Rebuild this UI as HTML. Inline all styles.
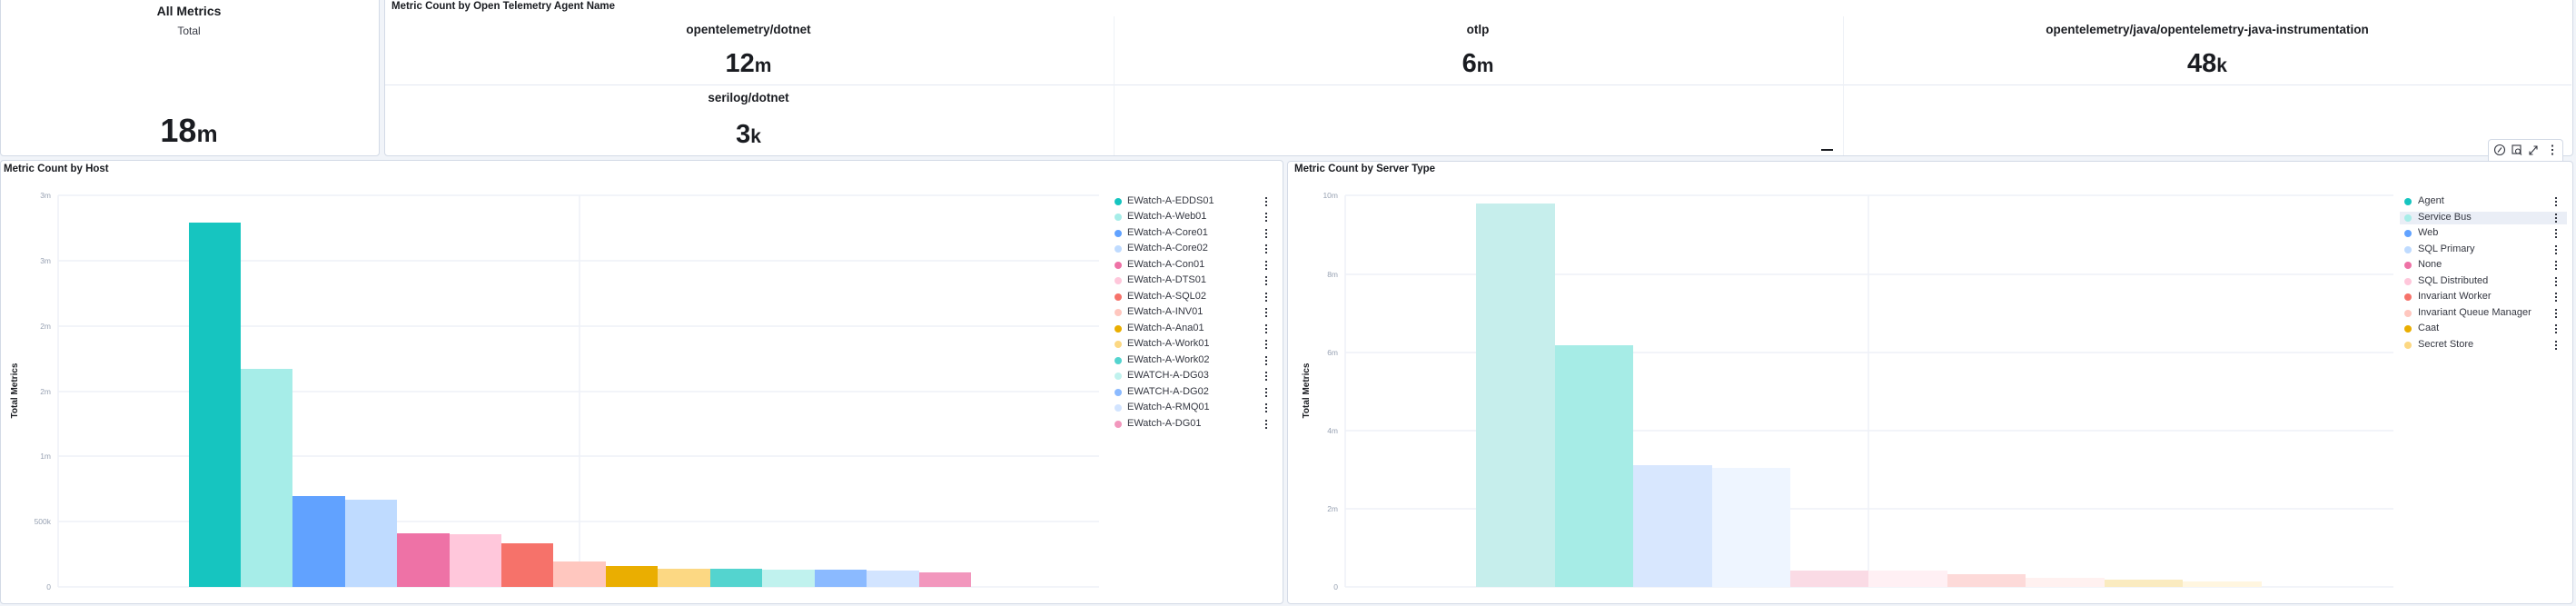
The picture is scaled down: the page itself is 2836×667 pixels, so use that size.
<!DOCTYPE html>
<html><head><meta charset="utf-8"><style>
*{margin:0;padding:0;box-sizing:border-box}
body{width:2836px;height:667px;background:#f1f4f9;position:relative;overflow:hidden;font-family:"Liberation Sans",sans-serif;color:#1a1c21}
.p{position:absolute;background:#fff;border:1px solid #d3dae6;border-radius:4px}
.a{position:absolute;white-space:nowrap}
.c{transform:translateX(-50%);text-align:center}
.t{font-size:11.5px;font-weight:bold;color:#1a1c21}
.lbl{font-size:13.5px;font-weight:bold}
.v{font-size:29px;font-weight:bold;color:#1a1c21}
.v small{font-size:21px}
.lg{font-size:11px;color:#343741}
.dot{position:absolute;width:8px;height:8px;border-radius:50%}
.kb{position:absolute;width:2px;height:10px;border-left:2px dotted #343741}
</style></head><body>

<div class="p" style="left:0;top:-4px;width:418px;height:176px"></div>
<div class="a c" style="left:208px;top:4px;font-size:14px;font-weight:bold">All Metrics</div>
<div class="a c lg" style="left:208px;top:27px;font-size:12px;color:#343741">Total</div>
<div class="a c v" style="left:208px;top:123px;font-size:36px">18<small style="font-size:26px">m</small></div>

<div class="p" style="left:423px;top:-4px;width:2410px;height:176px"></div>
<div class="a t" style="left:431px;top:1px;font-weight:bold">Metric Count by Open Telemetry Agent Name</div>
<div class="a" style="left:424px;top:93px;width:2407px;height:1px;background:#e3e8f2"></div>
<div class="a" style="left:1226px;top:18px;width:1px;height:153px;background:#eef1f6"></div>
<div class="a" style="left:2029px;top:18px;width:1px;height:153px;background:#eef1f6"></div>
<div class="a c lbl" style="left:824px;top:25px">opentelemetry/dotnet</div>
<div class="a c v" style="left:824px;top:54px">12<small>m</small></div>
<div class="a c lbl" style="left:1627px;top:25px">otlp</div>
<div class="a c v" style="left:1627px;top:54px">6<small>m</small></div>
<div class="a c lbl" style="left:2430px;top:25px">opentelemetry/java/opentelemetry-java-instrumentation</div>
<div class="a c v" style="left:2430px;top:54px">48<small>k</small></div>
<div class="a c lbl" style="left:824px;top:100px">serilog/dotnet</div>
<div class="a c v" style="left:824px;top:132px">3<small>k</small></div>
<div class="a" style="left:2005px;top:164px;width:13px;height:2px;background:#1a1c21"></div>

<!-- Host panel -->
<div class="p" style="left:0;top:176px;width:1413px;height:489px"></div>
<div class="a t" style="left:4px;top:180px">Metric Count by Host</div>
<svg class="a" style="left:0;top:0" width="1413" height="667">
<g stroke="#eef1f7" stroke-width="1.5">
<line x1="64" y1="215" x2="1210" y2="215"/><line x1="64" y1="287" x2="1210" y2="287"/><line x1="64" y1="359" x2="1210" y2="359"/><line x1="64" y1="431" x2="1210" y2="431"/><line x1="64" y1="502" x2="1210" y2="502"/><line x1="64" y1="574" x2="1210" y2="574"/><line x1="64" y1="646" x2="1210" y2="646"/>
<line x1="64" y1="215" x2="64" y2="646"/><line x1="638" y1="215" x2="638" y2="646"/>
</g>
<g font-size="8.5" fill="#98a2b3" text-anchor="end" font-family="Liberation Sans">
<text x="56" y="218">3m</text><text x="56" y="290">3m</text><text x="56" y="362">2m</text><text x="56" y="434">2m</text><text x="56" y="505">1m</text><text x="56" y="577">500k</text><text x="56" y="649">0</text>
</g>
<text transform="translate(19,430) rotate(-90)" font-size="10" font-weight="bold" fill="#1a1c21" text-anchor="middle" font-family="Liberation Sans">Total Metrics</text>
<rect x="208" y="245" width="57" height="401" fill="#16c5c0"/>
<rect x="265" y="406" width="57" height="240" fill="#a6ede8"/>
<rect x="322" y="546" width="58" height="100" fill="#61a2ff"/>
<rect x="380" y="550" width="57" height="96" fill="#bfdbff"/>
<rect x="437" y="587" width="58" height="59" fill="#ee72a6"/>
<rect x="495" y="588" width="57" height="58" fill="#ffc7db"/>
<rect x="552" y="598" width="57" height="48" fill="#f6726a"/>
<rect x="609" y="618" width="58" height="28" fill="#ffc7bf"/>
<rect x="667" y="623" width="57" height="23" fill="#eaae01"/>
<rect x="724" y="626" width="58" height="20" fill="#fcd883"/>
<rect x="782" y="626" width="57" height="20" fill="#54d4cf"/>
<rect x="839" y="627" width="58" height="19" fill="#c0f2ee"/>
<rect x="897" y="627" width="57" height="19" fill="#8bbaff"/>
<rect x="954" y="628" width="58" height="18" fill="#d2e4ff"/>
<rect x="1012" y="630" width="57" height="16" fill="#f297bd"/>
</svg>
<div class="dot" style="left:1227px;top:218px;background:#16c5c0"></div><div class="a lg" style="left:1241px;top:215px">EWatch-A-EDDS01</div>
<div class="dot" style="left:1227px;top:235px;background:#a6ede8"></div><div class="a lg" style="left:1241px;top:232px">EWatch-A-Web01</div>
<div class="dot" style="left:1227px;top:253px;background:#61a2ff"></div><div class="a lg" style="left:1241px;top:250px">EWatch-A-Core01</div>
<div class="dot" style="left:1227px;top:270px;background:#bfdbff"></div><div class="a lg" style="left:1241px;top:267px">EWatch-A-Core02</div>
<div class="dot" style="left:1227px;top:288px;background:#ee72a6"></div><div class="a lg" style="left:1241px;top:285px">EWatch-A-Con01</div>
<div class="dot" style="left:1227px;top:305px;background:#ffc7db"></div><div class="a lg" style="left:1241px;top:302px">EWatch-A-DTS01</div>
<div class="dot" style="left:1227px;top:323px;background:#f6726a"></div><div class="a lg" style="left:1241px;top:320px">EWatch-A-SQL02</div>
<div class="dot" style="left:1227px;top:340px;background:#ffc7bf"></div><div class="a lg" style="left:1241px;top:337px">EWatch-A-INV01</div>
<div class="dot" style="left:1227px;top:358px;background:#eaae01"></div><div class="a lg" style="left:1241px;top:355px">EWatch-A-Ana01</div>
<div class="dot" style="left:1227px;top:375px;background:#fcd883"></div><div class="a lg" style="left:1241px;top:372px">EWatch-A-Work01</div>
<div class="dot" style="left:1227px;top:393px;background:#54d4cf"></div><div class="a lg" style="left:1241px;top:390px">EWatch-A-Work02</div>
<div class="dot" style="left:1227px;top:410px;background:#c0f2ee"></div><div class="a lg" style="left:1241px;top:407px">EWATCH-A-DG03</div>
<div class="dot" style="left:1227px;top:428px;background:#8bbaff"></div><div class="a lg" style="left:1241px;top:425px">EWATCH-A-DG02</div>
<div class="dot" style="left:1227px;top:445px;background:#d2e4ff"></div><div class="a lg" style="left:1241px;top:442px">EWatch-A-RMQ01</div>
<div class="dot" style="left:1227px;top:463px;background:#f297bd"></div><div class="a lg" style="left:1241px;top:460px">EWatch-A-DG01</div>
<div class="kb" style="left:1393px;top:217px"></div><div class="kb" style="left:1393px;top:234px"></div><div class="kb" style="left:1393px;top:252px"></div><div class="kb" style="left:1393px;top:269px"></div><div class="kb" style="left:1393px;top:287px"></div><div class="kb" style="left:1393px;top:304px"></div><div class="kb" style="left:1393px;top:322px"></div><div class="kb" style="left:1393px;top:339px"></div><div class="kb" style="left:1393px;top:357px"></div><div class="kb" style="left:1393px;top:374px"></div><div class="kb" style="left:1393px;top:392px"></div><div class="kb" style="left:1393px;top:409px"></div><div class="kb" style="left:1393px;top:427px"></div><div class="kb" style="left:1393px;top:444px"></div><div class="kb" style="left:1393px;top:462px"></div>

<!-- Server type panel -->
<div class="p" style="left:1417px;top:177px;width:1416px;height:488px"></div>
<div class="a t" style="left:1425px;top:180px">Metric Count by Server Type</div>
<svg class="a" style="left:1416px;top:0" width="1420" height="667">
<g stroke="#eef1f7" stroke-width="1.5">
<line x1="65" y1="215" x2="1219" y2="215"/><line x1="65" y1="302" x2="1219" y2="302"/><line x1="65" y1="388" x2="1219" y2="388"/><line x1="65" y1="474" x2="1219" y2="474"/><line x1="65" y1="560" x2="1219" y2="560"/><line x1="65" y1="646" x2="1219" y2="646"/>
<line x1="65" y1="215" x2="65" y2="646"/><line x1="641" y1="215" x2="641" y2="646"/>
</g>
<g font-size="8.5" fill="#98a2b3" text-anchor="end" font-family="Liberation Sans">
<text x="57" y="218">10m</text><text x="57" y="305">8m</text><text x="57" y="391">6m</text><text x="57" y="477">4m</text><text x="57" y="563">2m</text><text x="57" y="649">0</text>
</g>
<text transform="translate(25,430) rotate(-90)" font-size="10" font-weight="bold" fill="#1a1c21" text-anchor="middle" font-family="Liberation Sans">Total Metrics</text>
<rect x="209" y="224" width="87" height="422" fill="#c6eeec"/>
<rect x="296" y="380" width="86" height="266" fill="#a6ece6"/>
<rect x="382" y="512" width="87" height="134" fill="#d8e7fe"/>
<rect x="469" y="515" width="86" height="131" fill="#eef5ff"/>
<rect x="555" y="628" width="86" height="18" fill="#fadbe5"/>
<rect x="641" y="628" width="87" height="18" fill="#fff0f4"/>
<rect x="728" y="632" width="86" height="14" fill="#fddad9"/>
<rect x="814" y="636" width="87" height="10" fill="#fff1f0"/>
<rect x="901" y="638" width="86" height="8" fill="#faebc0"/>
<rect x="987" y="640" width="87" height="6" fill="#fff6e0"/>
</svg>
<div class="a" style="left:2642px;top:233px;width:184px;height:14px;background:#eaeef6"></div>
<div class="dot" style="left:2647px;top:218px;background:#16c5c0"></div><div class="a lg" style="left:2662px;top:215px">Agent</div>
<div class="dot" style="left:2647px;top:236px;background:#a6ede8"></div><div class="a lg" style="left:2662px;top:233px">Service Bus</div>
<div class="dot" style="left:2647px;top:253px;background:#61a2ff"></div><div class="a lg" style="left:2662px;top:250px">Web</div>
<div class="dot" style="left:2647px;top:271px;background:#bfdbff"></div><div class="a lg" style="left:2662px;top:268px">SQL Primary</div>
<div class="dot" style="left:2647px;top:288px;background:#ee72a6"></div><div class="a lg" style="left:2662px;top:285px">None</div>
<div class="dot" style="left:2647px;top:306px;background:#ffc7db"></div><div class="a lg" style="left:2662px;top:303px">SQL Distributed</div>
<div class="dot" style="left:2647px;top:323px;background:#f6726a"></div><div class="a lg" style="left:2662px;top:320px">Invariant Worker</div>
<div class="dot" style="left:2647px;top:341px;background:#ffc7bf"></div><div class="a lg" style="left:2662px;top:338px">Invariant Queue Manager</div>
<div class="dot" style="left:2647px;top:358px;background:#eaae01"></div><div class="a lg" style="left:2662px;top:355px">Caat</div>
<div class="dot" style="left:2647px;top:376px;background:#fcd883"></div><div class="a lg" style="left:2662px;top:373px">Secret Store</div>
<div class="kb" style="left:2813px;top:217px"></div><div class="kb" style="left:2813px;top:235px"></div><div class="kb" style="left:2813px;top:252px"></div><div class="kb" style="left:2813px;top:270px"></div><div class="kb" style="left:2813px;top:287px"></div><div class="kb" style="left:2813px;top:305px"></div><div class="kb" style="left:2813px;top:322px"></div><div class="kb" style="left:2813px;top:340px"></div><div class="kb" style="left:2813px;top:357px"></div><div class="kb" style="left:2813px;top:375px"></div>

<!-- toolbar -->
<div class="a" style="left:2739px;top:153px;width:83px;height:24px;background:#fff;border:1px solid #d3dae6;border-bottom:none;border-radius:4px 4px 0 0"></div>
<svg class="a" style="left:2739px;top:153px" width="84" height="24" fill="none" stroke="#343741" stroke-width="1.1">
<circle cx="13" cy="12" r="5.5"/><path d="M15 9.5 L11 14.5"/>
<rect x="27" y="7" width="9" height="9"/><circle cx="33" cy="13.5" r="2.5"/><path d="M35 15.5 L37 17.5"/>
<path d="M46 17 L54 8 M50.5 8 L54 8 L54 11.5 M46 13.5 L46 17 L49.5 17"/>
<rect x="70" y="6.5" width="2" height="2" fill="#343741" stroke="none"/><rect x="70" y="11" width="2" height="2" fill="#343741" stroke="none"/><rect x="70" y="15.5" width="2" height="2" fill="#343741" stroke="none"/>
</svg>
</body></html>
